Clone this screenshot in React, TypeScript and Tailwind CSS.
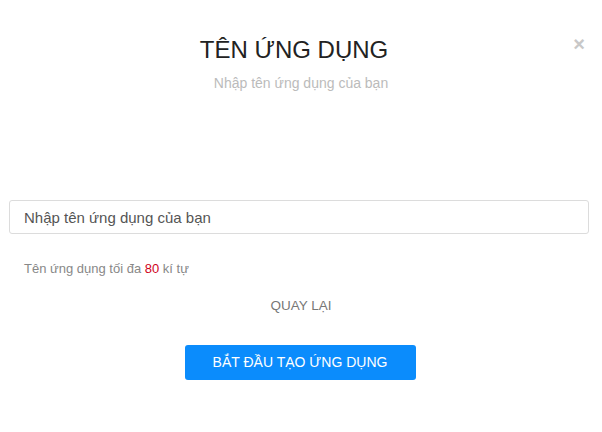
import React from 'react';

const App: React.FC = () => {
  return (
    <div className="relative w-[602px] h-[432px] bg-white font-['Liberation_Sans',Arial,sans-serif]">
      {/* Close */}
      <button className="absolute right-[17px] top-[34px] text-[#c8c8c8] text-[20px] font-bold leading-none">
        ×
      </button>

      {/* Header */}
      <div className="pt-[36px] text-center">
        <h1 className="pr-[14px] text-[24px] leading-[28px] text-[#222]">TÊN ỨNG DỤNG</h1>
        <p className="mt-[11px] text-[14px] leading-[16px] text-[#bbbbbb]">Nhập tên ứng dụng của bạn</p>
      </div>

      {/* Form */}
      <div className="px-[9px] pt-[109px]">
        <input
          type="text"
          placeholder="Nhập tên ứng dụng của bạn"
          className="w-[580px] h-[34px] border border-[#dcdcdc] rounded-[3px] px-[14px] text-[15px] text-[#555] placeholder:text-[#555] outline-none"
        />
        <p className="mt-[27px] pl-[15px] text-[13px] leading-[15px] text-[#888]">
          Tên ứng dụng tối đa <span className="text-[#d0021b]">80</span> kí tự
        </p>
      </div>

      <div className="mt-[22px] text-center text-[13.5px] leading-[16px] text-[#777]">QUAY LẠI</div>

      <div className="mt-[31px] flex justify-center">
        <button className="w-[231px] h-[35px] rounded-[3px] bg-[#0b8cfc] text-white text-[14px] ml-[-2px]">
          BẮT ĐẦU TẠO ỨNG DỤNG
        </button>
      </div>
    </div>
  );
};

export default App;
